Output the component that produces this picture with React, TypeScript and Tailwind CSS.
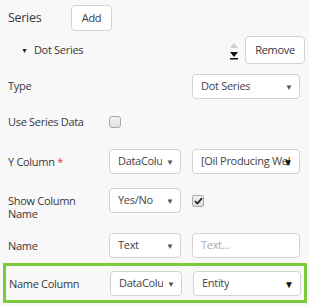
import React from "react";

const font = { fontFamily: '"Open Sans", "Segoe UI", sans-serif' };

function Select({ value, w, dark }: { value: string; w: string; dark?: boolean }) {
  return (
    <div className={`${w} h-[25px] shrink-0 bg-white border border-[#d2d2d2] rounded-[4px] flex items-center pl-[8px] ${dark ? "pr-[9px]" : "pr-[18px]"} relative overflow-hidden`}>
      <span className="text-[11px] tracking-[-0.3px] text-[#444] whitespace-nowrap overflow-hidden">{value}</span>
      <span
        className={`absolute right-[6px] top-1/2 -translate-y-1/2 ${dark ? "text-[#111] text-[10px]" : "text-[#555] text-[8px]"} leading-none`}
      >
        ▼
      </span>
    </div>
  );
}

function Row({ label, children, className = "" }: { label: React.ReactNode; children?: React.ReactNode; className?: string }) {
  return (
    <div className={`flex items-center ${className}`}>
      <div className="w-[101px] shrink-0 text-[11px] tracking-[-0.3px] text-[#383838] leading-[13px]">{label}</div>
      <div className="flex items-center gap-[11px] flex-1">{children}</div>
    </div>
  );
}

export default function App() {
  return (
    <div className="w-[309px] h-[306px] bg-[#f8f8f8] overflow-hidden" style={font}>
      <div className="pl-[8px] pr-[9px] pt-[5px]">
        {/* Header */}
        <div className="flex items-center h-[26px]">
          <div className="w-[63px] text-[12.5px] tracking-[-0.3px] text-[#383838]">Series</div>
          <button className="w-[41px] h-[26px] bg-white border border-[#d2d2d2] rounded-[4px] text-[11px] tracking-[-0.3px] text-[#383838]">Add</button>
        </div>

        {/* Dot series row */}
        <div className="flex items-center h-[28px] mt-[5px]">
          <span className="ml-[13px] text-[7px] text-[#222] leading-none">▼</span>
          <span className="ml-[6px] text-[11px] tracking-[-0.3px] text-[#383838]">Dot Series</span>
          <svg className="ml-auto" width="8" height="20" viewBox="0 0 8 20">
            <polygon points="0,8 4,3 8,8" fill="#d0d0d0" />
            <polygon points="0,12 8,12 4,17" fill="#111" />
            <rect x="0" y="18" width="8" height="1.5" fill="#111" />
          </svg>
          <button className="ml-[7px] mr-[-5px] w-[60px] h-[28px] bg-white border border-[#d2d2d2] rounded-[4px] text-[11px] tracking-[-0.3px] text-[#383838]">Remove</button>
        </div>

        {/* Type */}
        <div className="flex items-center h-[25px] mt-[10px]">
          <div className="text-[11px] tracking-[-0.3px] text-[#383838]">Type</div>
          <div className="ml-auto">
            <Select value="Dot Series" w="w-[108px]" />
          </div>
        </div>

        {/* Use series data */}
        <Row label="Use Series Data" className="h-[25px] mt-[10px]">
          <div className="w-[12px] h-[12px] border border-[#a8a8a8] rounded-[3px] bg-gradient-to-b from-[#f4f4f4] to-[#e0e0e0]" />
        </Row>

        {/* Y Column */}
        <Row
          label={
            <>
              Y Column <span className="text-[#e04040]">*</span>
            </>
          }
          className="h-[25px] mt-[15px]"
        >
          <Select value="DataColumn" w="w-[72px]" />
          <Select value="[Oil Producing Wells]" w="w-[108px]" dark />
        </Row>

        {/* Show column name */}
        <div className="flex items-start mt-[14px]">
          <div className="w-[101px] shrink-0 text-[11px] tracking-[-0.3px] text-[#383838] leading-[13px] pt-[6px]">
            Show Column
            <br />
            Name
          </div>
          <div className="flex items-center gap-[11px]">
            <Select value="Yes/No" w="w-[72px]" />
            <div className="w-[12px] h-[12px] border border-[#a8a8a8] rounded-[2px] bg-gradient-to-b from-[#f4f4f4] to-[#dcdcdc] flex items-center justify-center">
              <svg width="9" height="8" viewBox="0 0 9 8">
                <path d="M1 4.2 L3.4 6.5 L8 1.2" stroke="#222" strokeWidth="1.8" fill="none" />
              </svg>
            </div>
          </div>
        </div>

        {/* Name */}
        <Row label="Name" className="h-[25px] mt-[13px]">
          <Select value="Text" w="w-[72px]" />
          <div className="w-[108px] h-[25px] bg-white border border-[#d2d2d2] rounded-[4px] flex items-center pl-[8px] text-[11px] tracking-[-0.3px] text-[#aaa]">
            Text...
          </div>
        </Row>
      </div>

      {/* Name column highlighted */}
      <div className="ml-[3px] mr-[2px] mt-[5px] border-[3px] border-[#7ccb3c] pl-[3px] pt-[5px] pb-[4px]">
        <Row label="Name Column" className="h-[25px]">
          <Select value="DataColumn" w="w-[72px]" />
          <Select value="Entity" w="w-[108px]" dark />
        </Row>
      </div>
    </div>
  );
}
